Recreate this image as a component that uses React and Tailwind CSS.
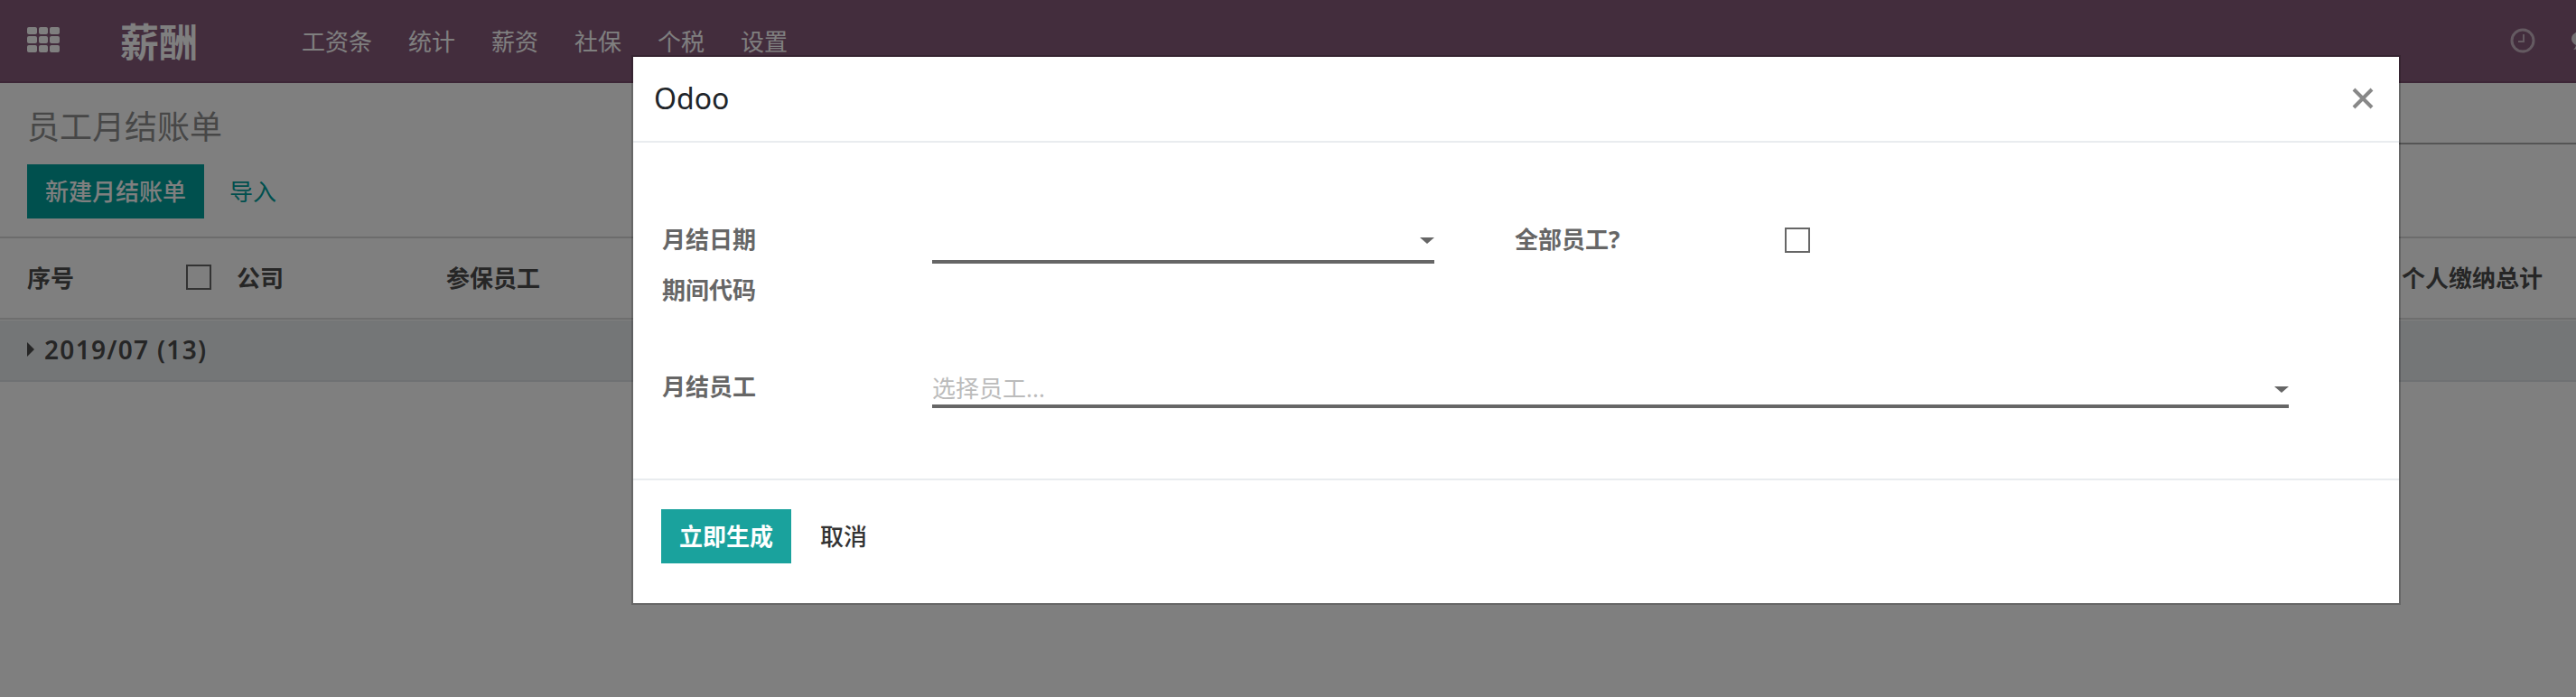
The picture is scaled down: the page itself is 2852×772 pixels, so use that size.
import React from "react";

const font = "font-['Noto_Sans','Noto_Sans_CJK_SC',sans-serif]";
const navItems = ["工资条", "统计", "薪资", "社保", "个税", "设置"];

const AppsIcon = () => (
  <div className="grid grid-cols-3 gap-[2px] w-[36px] -mt-[2px]">
    {Array.from({ length: 9 }).map((_, i) => (
      <span key={i} className="h-[8px] rounded-[2px] bg-white" />
    ))}
  </div>
);

const ClockIcon = () => (
  <svg width="28" height="28" viewBox="0 0 28 28" fill="none" stroke="#fff" strokeOpacity="0.55" className="shrink-0">
    <circle cx="14" cy="14" r="12" strokeWidth="3" />
    <path d="M15 7v8H9" strokeWidth="2" />
  </svg>
);

const Caret = ({ className }) => (
  <span className={`w-0 h-0 border-x-[8px] border-x-transparent border-t-[7px] border-t-[#666] ${className}`} />
);

const Checkbox = ({ className }) => (
  <span className={`block w-[28px] h-[28px] border-2 border-[#666] bg-white ${className}`} />
);

const Field = ({ placeholder, className, caretClass }) => (
  <div className={`flex items-center justify-between h-[44px] border-b-4 border-[#666] ${className}`}>
    <span className="mt-[4px] text-[26px] leading-[36px] text-[#bbb]">{placeholder}</span>
    <Caret className={caretClass} />
  </div>
);

export default function App() {
  return (
    <div className={`relative h-[772px] overflow-hidden bg-white text-[26px] text-[#4c4c4c] ${font}`}>
      {/* Page behind the dialog */}
      <nav className="flex items-center h-[92px] pl-[30px] bg-[#875a7b] border-b-2 border-[#7a4f6f] text-white overflow-hidden">
        <AppsIcon />
        <span className="ml-[67px] mr-[115px] mt-[3px] text-[43px] font-bold leading-none">薪酬</span>
        <div className="flex gap-[40px] mt-[3px]">
          {navItems.map((item) => (
            <span key={item}>{item}</span>
          ))}
        </div>
        <div className="ml-auto -mr-[22px] flex items-center gap-[39px]">
          <ClockIcon />
          <svg width="28" height="24" viewBox="0 0 28 24" fill="#fff" fillOpacity="0.8" className="shrink-0">
            <path d="M14 1C6.5 1 1 5 1 10c0 3 2 5.500 5 7-.5 2-1.500 4-3 5 3 0 6-1.500 8-3.500 1 .2 2 .5 3 .5 7.500 0 13-4 13-9S21.500 1 14 1z" />
          </svg>
        </div>
      </nav>

      <div className="flex justify-between h-[172px] pl-[30px] border-b-2 border-[#d8d8d8]">
        <div>
          <h1 className="mt-[25px] text-[36px] leading-[48px] text-[#8f8f8f]">员工月结账单</h1>
          <div className="flex items-center mt-[17px]">
            <button className="w-[196px] h-[60px] bg-[#00a09d] text-white font-medium">新建月结账单</button>
            <span className="ml-[28px] text-[#00a09d]">导入</span>
          </div>
        </div>
        <div className="w-[700px] h-[68px] border-b-2 border-[#aaa]" />
      </div>

      <div className="flex items-center h-[90px] pl-[30px] pr-[37px] border-b-2 border-[#dcdcdc] font-bold">
        <span className="w-[176px]">序号</span>
        <Checkbox className="-mt-[2px]" />
        <span className="ml-[28px] w-[232px]">公司</span>
        <span>参保员工</span>
        <span className="ml-auto">个人缴纳总计</span>
      </div>

      <div className="flex items-center h-[68px] mt-[1px] pl-[30px] pb-[2px] bg-[#e9ecef] border-b-2 border-[#dee2e6] text-[28px] font-semibold tracking-[1.3px]">
        <span className="w-0 h-0 border-y-[8px] border-y-transparent border-l-[8px] border-l-[#4c4c4c]" />
        <span className="ml-[11px]">2019/07 (13)</span>
      </div>

      {/* Backdrop */}
      <div className="fixed inset-0 bg-black/50" />

      {/* Dialog */}
      <div className="fixed left-[699px] top-[61px] w-[1959px] h-[609px] flex flex-col bg-white bg-clip-padding border-2 border-black/20 text-[#666]">
        <header className="flex items-center justify-between h-[95px] shrink-0 pb-[2px] pl-[23px] pr-[28px] border-b-2 border-[#e9ecef]">
          <span className="text-[32px] text-[#212529]">Odoo</span>
          <svg width="24" height="24" viewBox="0 0 24 24" stroke="#888" strokeWidth="4" fill="none">
            <path d="M2 2l20 20M22 2L2 22" />
          </svg>
        </header>

        <div className="flex-1 pl-[32px] pt-[89px] font-bold">
          <div className="flex items-start h-[56px]">
            <span className="w-[299px] leading-[36px]">月结日期</span>
            <Field className="w-[556px] mt-[1px]" caretClass="-mt-[3px]" />
            <span className="ml-[89px] w-[299px] leading-[36px]">全部员工?</span>
            <Checkbox className="mt-[5px]" />
          </div>
          <div className="leading-[36px]">期间代码</div>
          <div className="flex items-start mt-[71px]">
            <span className="w-[299px] leading-[36px]">月结员工</span>
            <Field placeholder="选择员工..." className="w-[1502px] -mt-[2px] font-normal" caretClass="mt-[6px]" />
          </div>
        </div>

        <footer className="flex items-start h-[138px] shrink-0 pt-[32px] pl-[31px] border-t-2 border-[#e9ecef]">
          <button className="w-[144px] h-[60px] bg-[#1aa29d] text-white font-semibold">立即生成</button>
          <button className="ml-[32px] h-[60px] font-medium text-[#333]">取消</button>
        </footer>
      </div>
    </div>
  );
}
